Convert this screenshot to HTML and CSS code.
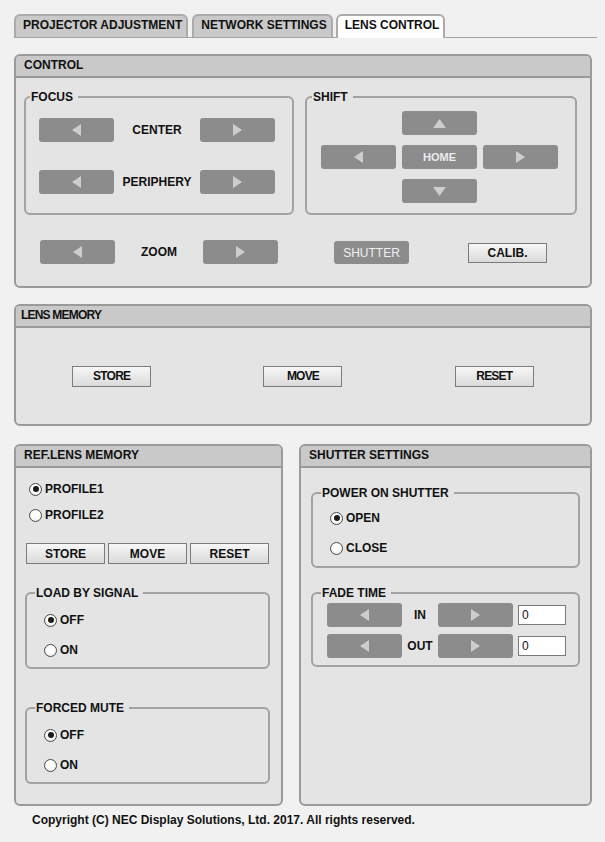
FILE: index.html
```html
<!DOCTYPE html>
<html>
<head>
<meta charset="utf-8">
<title>Lens Control</title>
<link rel="stylesheet" href="styles.css">
</head>
<body>
<div class="page">
  <nav class="tabs">
    <div class="tab">PROJECTOR ADJUSTMENT</div>
    <div class="tab">NETWORK SETTINGS</div>
    <div class="tab active">LENS CONTROL</div>
  </nav>

  <section class="panel control">
    <h2 class="panel-head">CONTROL</h2>
    <div class="control-body">
      <div class="control-top">
        <fieldset class="group focus">
          <legend>FOCUS</legend>
          <div class="focus-body">
            <div class="arrow-row">
              <button class="dbtn"><svg class="tri" width="9" height="12" viewBox="0 0 9 12"><polygon points="9,0 9,12 0,6"/></svg></button>
              <span class="lbl">CENTER</span>
              <button class="dbtn"><svg class="tri" width="9" height="12" viewBox="0 0 9 12"><polygon points="0,0 9,6 0,12"/></svg></button>
            </div>
            <div class="arrow-row">
              <button class="dbtn"><svg class="tri" width="9" height="12" viewBox="0 0 9 12"><polygon points="9,0 9,12 0,6"/></svg></button>
              <span class="lbl">PERIPHERY</span>
              <button class="dbtn"><svg class="tri" width="9" height="12" viewBox="0 0 9 12"><polygon points="0,0 9,6 0,12"/></svg></button>
            </div>
          </div>
        </fieldset>
        <fieldset class="group shift">
          <legend>SHIFT</legend>
          <div class="shift-grid">
            <button class="dbtn up"><svg class="tri" width="13" height="9" viewBox="0 0 13 9"><polygon points="6.5,0 13,9 0,9"/></svg></button>
            <button class="dbtn left"><svg class="tri" width="9" height="12" viewBox="0 0 9 12"><polygon points="9,0 9,12 0,6"/></svg></button>
            <button class="dbtn home">HOME</button>
            <button class="dbtn right"><svg class="tri" width="9" height="12" viewBox="0 0 9 12"><polygon points="0,0 9,6 0,12"/></svg></button>
            <button class="dbtn down"><svg class="tri" width="13" height="9" viewBox="0 0 13 9"><polygon points="0,0 13,0 6.5,9"/></svg></button>
          </div>
        </fieldset>
      </div>
      <div class="zoom-row">
        <button class="dbtn"><svg class="tri" width="9" height="12" viewBox="0 0 9 12"><polygon points="9,0 9,12 0,6"/></svg></button>
        <span class="lbl zoom-lbl">ZOOM</span>
        <button class="dbtn"><svg class="tri" width="9" height="12" viewBox="0 0 9 12"><polygon points="0,0 9,6 0,12"/></svg></button>
        <button class="dbtn shutter">SHUTTER</button>
        <button class="lbtn calib">CALIB.</button>
      </div>
    </div>
  </section>

  <section class="panel lens">
    <h2 class="panel-head tight lens-head">LENS MEMORY</h2>
    <div class="lens-body">
      <button class="lbtn tight">STORE</button>
      <button class="lbtn tight">MOVE</button>
      <button class="lbtn tight">RESET</button>
    </div>
  </section>

  <div class="bottom">
    <section class="panel ref">
      <h2 class="panel-head">REF.LENS MEMORY</h2>
      <div class="ref-body">
        <div class="radio-row profile"><span class="radio checked"></span>PROFILE1</div>
        <div class="radio-row profile"><span class="radio"></span>PROFILE2</div>
        <div class="btn-row">
          <button class="lbtn">STORE</button>
          <button class="lbtn">MOVE</button>
          <button class="lbtn">RESET</button>
        </div>
        <fieldset class="group sub load">
          <legend>LOAD BY SIGNAL</legend>
          <div class="opts">
            <div class="radio-row"><span class="radio checked"></span>OFF</div>
            <div class="radio-row"><span class="radio"></span>ON</div>
          </div>
        </fieldset>
        <fieldset class="group sub mute">
          <legend>FORCED MUTE</legend>
          <div class="opts">
            <div class="radio-row"><span class="radio checked"></span>OFF</div>
            <div class="radio-row"><span class="radio"></span>ON</div>
          </div>
        </fieldset>
      </div>
    </section>

    <section class="panel shut">
      <h2 class="panel-head">SHUTTER SETTINGS</h2>
      <div class="shut-body">
        <fieldset class="group sub power">
          <legend>POWER ON SHUTTER</legend>
          <div class="opts power-opts">
            <div class="radio-row"><span class="radio checked"></span>OPEN</div>
            <div class="radio-row"><span class="radio"></span>CLOSE</div>
          </div>
        </fieldset>
        <fieldset class="group sub fade">
          <legend>FADE TIME</legend>
          <div class="fade-body">
            <div class="fade-row">
              <button class="dbtn"><svg class="tri" width="9" height="12" viewBox="0 0 9 12"><polygon points="9,0 9,12 0,6"/></svg></button>
              <span class="lbl fade-lbl">IN</span>
              <button class="dbtn"><svg class="tri" width="9" height="12" viewBox="0 0 9 12"><polygon points="0,0 9,6 0,12"/></svg></button>
              <input class="num" type="text" value="0">
            </div>
            <div class="fade-row">
              <button class="dbtn"><svg class="tri" width="9" height="12" viewBox="0 0 9 12"><polygon points="9,0 9,12 0,6"/></svg></button>
              <span class="lbl fade-lbl">OUT</span>
              <button class="dbtn"><svg class="tri" width="9" height="12" viewBox="0 0 9 12"><polygon points="0,0 9,6 0,12"/></svg></button>
              <input class="num" type="text" value="0">
            </div>
          </div>
        </fieldset>
      </div>
    </section>
  </div>

  <p class="copyright">Copyright (C) NEC Display Solutions, Ltd. 2017. All rights reserved.</p>
</div>
</body>
</html>
```

FILE: styles.css
```css
* { box-sizing: border-box; }

body {
  margin: 0;
  background: #f1f1f1;
  font-family: "Liberation Sans", Arial, sans-serif;
  font-size: 12px;
  color: #111;
}

.page {
  width: 605px;
  padding: 14px 0 0 14px;
}

/* Tabs */
.tabs {
  display: flex;
  align-items: flex-start;
  gap: 3px;
  width: 583px;
  height: 24px;
  border-bottom: 1px solid #a3a3a3;
}
.tab {
  height: 23px;
  padding: 0 4px 0 7px;
  border: 2px solid #ababab;
  border-bottom: none;
  border-radius: 6px 6px 0 0;
  background: #c9c9c9;
  font-weight: bold;
  line-height: 19px;
  white-space: nowrap;
}
.tab:first-child { margin-right: 1px; }
.tab.active {
  height: 24px;
  background: #fff;
}

/* Panels */
.panel {
  border: 2px solid #9a9a9a;
  border-radius: 6px;
  background: #e4e4e4;
  overflow: hidden;
}
.panel-head {
  margin: 0;
  height: 22px;
  padding-left: 8px;
  background: #c9c9c9;
  border-bottom: 2px solid #9a9a9a;
  font-size: 12px;
  font-weight: bold;
  line-height: 19px;
}
.tight { letter-spacing: -0.8px; }
.lens-head { padding-left: 5px; }

.control {
  width: 578px;
  margin-top: 16px;
}
.control-body {
  padding: 12px 0 22px 0;
}
.control-top {
  display: flex;
  gap: 11px;
  padding-left: 8px;
}

/* Fieldsets */
.group {
  margin: 0;
  padding: 0;
  min-width: 0;
  border: 2px solid #a2a2a2;
  border-radius: 6px;
}
.group legend {
  margin-left: 8px;
  padding: 0 5px 0 1px;
  font-weight: bold;
  font-size: 12px;
  line-height: 14px;
}
.focus { width: 270px; }
.focus legend { margin-left: 4px; padding-left: 1px; }
.shift { width: 272px; }
.shift legend { margin-left: 5px; padding-left: 1px; }

.focus-body {
  display: flex;
  flex-direction: column;
  gap: 28px;
  padding: 14px 0 19px 13px;
}
.arrow-row {
  display: flex;
  align-items: center;
  height: 24px;
}
.lbl {
  width: 86px;
  text-align: center;
  font-weight: bold;
}

.shift-grid {
  display: grid;
  grid-template-columns: repeat(3, 75px);
  grid-template-rows: repeat(3, 24px);
  gap: 10px 6px;
  padding: 7px 0 10px 14px;
}
.shift-grid .up { grid-column: 2; grid-row: 1; }
.shift-grid .left { grid-column: 1; grid-row: 2; }
.shift-grid .home { grid-column: 2; grid-row: 2; }
.shift-grid .right { grid-column: 3; grid-row: 2; }
.shift-grid .down { grid-column: 2; grid-row: 3; }

/* Buttons */
button {
  font-family: inherit;
  margin: 0;
  padding: 0;
}
.dbtn {
  display: flex;
  align-items: center;
  justify-content: center;
  width: 75px;
  height: 24px;
  border: none;
  border-radius: 3px;
  background: #8c8c8c;
  color: #ececec;
}
.tri { fill: #cdcdcd; display: block; }
.home {
  font-size: 11px;
  font-weight: bold;
}
.lbtn {
  width: 79px;
  height: 21px;
  border: 1px solid #7c7c7c;
  background: linear-gradient(#f7f7f7, #dadada);
  color: #111;
  font-size: 12px;
  font-weight: bold;
}

.zoom-row {
  display: flex;
  align-items: center;
  height: 24px;
  margin-top: 25px;
  padding-left: 24px;
}
.zoom-lbl { width: 88px; }
.shutter {
  height: 23px;
  margin-left: 56px;
  margin-top: 1px;
  font-size: 12px;
  font-weight: normal;
  color: #f0f0f0;
}
.calib {
  height: 20px;
  margin-left: 59px;
  margin-top: 1px;
}

/* Lens memory */
.lens {
  width: 578px;
  margin-top: 16px;
}
.lens-body {
  display: grid;
  grid-template-columns: repeat(3, 1fr);
  align-items: center;
  justify-items: center;
  height: 96px;
}

/* Bottom */
.bottom {
  display: flex;
  gap: 16px;
  margin-top: 18px;
  height: 362px;
}
.ref { width: 269px; }
.shut { width: 293px; }

.ref-body { padding-top: 8px; }
.radio-row {
  display: flex;
  align-items: center;
  gap: 3px;
  height: 30px;
  font-weight: bold;
}
.radio-row.profile {
  height: 26px;
  padding-left: 13px;
}
.radio {
  width: 13px;
  height: 13px;
  border-radius: 50%;
  border: 1px solid #4a4a4a;
  background: radial-gradient(circle at 50% 40%, #ffffff 40%, #e2e2e2 100%);
  display: flex;
  align-items: center;
  justify-content: center;
  flex: none;
}
.radio.checked::after {
  content: "";
  width: 6px;
  height: 6px;
  border-radius: 50%;
  background: #1a1a1a;
}
.btn-row {
  display: flex;
  gap: 3px;
  margin-top: 15px;
  padding-left: 10px;
}

.sub {
  width: 245px;
  margin-left: 9px;
}
.load { margin-top: 22px; }
.mute { margin-top: 32px; }
.opts {
  padding: 5px 0 2px 17px;
}

.power {
  width: 269px;
  margin-left: 10px;
  margin-top: 18px;
}
.power-opts { padding: 3px 0 3px 17px; }
.fade {
  width: 269px;
  margin-left: 10px;
  margin-top: 18px;
}
.fade-body {
  display: flex;
  flex-direction: column;
  gap: 7px;
  padding: 3px 0 7px 14px;
}
.fade-row {
  display: flex;
  align-items: center;
  height: 24px;
}
.fade-lbl { width: 36px; }
.num {
  width: 48px;
  height: 20px;
  margin: 0 0 0 5px;
  padding: 0 3px;
  border: 1px solid #7a7a7a;
  background: #fff;
  font-family: inherit;
  font-size: 12px;
  color: #111;
}

.copyright {
  margin: 7px 0 0 0;
  padding-left: 18px;
  font-weight: bold;
  font-size: 12px;
  line-height: 14px;
}
```
